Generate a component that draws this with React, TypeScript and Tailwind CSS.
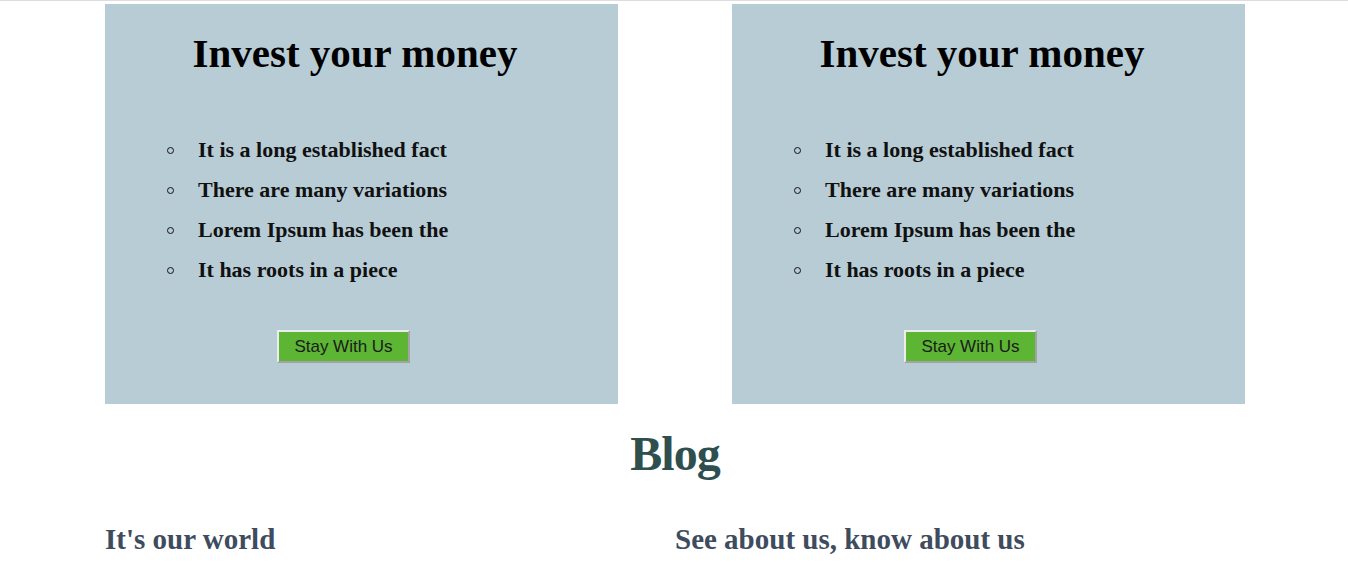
export default function App() {
  const items = [
    "It is a long established fact",
    "There are many variations",
    "Lorem Ipsum has been the",
    "It has roots in a piece",
  ];

  const Card = () => (
    <div className="w-[513px] h-[400px] bg-[#b8ccd6] pt-[26px]">
      <h2 className="text-center pr-[13px] text-[41px] leading-[46px] font-bold text-black">
        Invest your money
      </h2>
      <ul className="mt-[54px] ml-[62px] text-[22px] leading-[40px] font-bold text-[#111]">
        {items.map((t) => (
          <li key={t} className="flex items-center">
            <span className="w-[7px] h-[7px] rounded-full border border-[#111] mr-[24px] mt-[1px]" />
            {t}
          </li>
        ))}
      </ul>
      <div className="mt-[40px] flex justify-center pr-[36px]">
        <button className="w-[133px] h-[33px] bg-[#5cb533] border-2 border-t-[#ececec] border-l-[#ececec] border-b-[#a3a3a3] border-r-[#a3a3a3] text-[17px] text-[#1b1b1b] font-['Liberation_Sans',Arial,sans-serif]">
          Stay With Us
        </button>
      </div>
    </div>
  );

  return (
    <div className="min-h-screen bg-white border-t border-[#dddde0] font-['Liberation_Serif','Times_New_Roman',serif]">
      <div className="w-[1140px] ml-[105px]">
        <div className="flex justify-between mt-[3px]">
          <Card />
          <Card />
        </div>
        <h1 className="mt-[22px] text-center text-[48px] leading-[55px] font-bold tracking-[-1px] text-[#2f4f4f]">
          Blog
        </h1>
        <div className="mt-[42px] grid grid-cols-2">
          <h3 className="text-[29px] leading-[32px] font-bold text-[#3e4c5e]">It's our world</h3>
          <h3 className="text-[29px] leading-[32px] font-bold text-[#3e4c5e]">See about us, know about us</h3>
        </div>
      </div>
    </div>
  );
}
